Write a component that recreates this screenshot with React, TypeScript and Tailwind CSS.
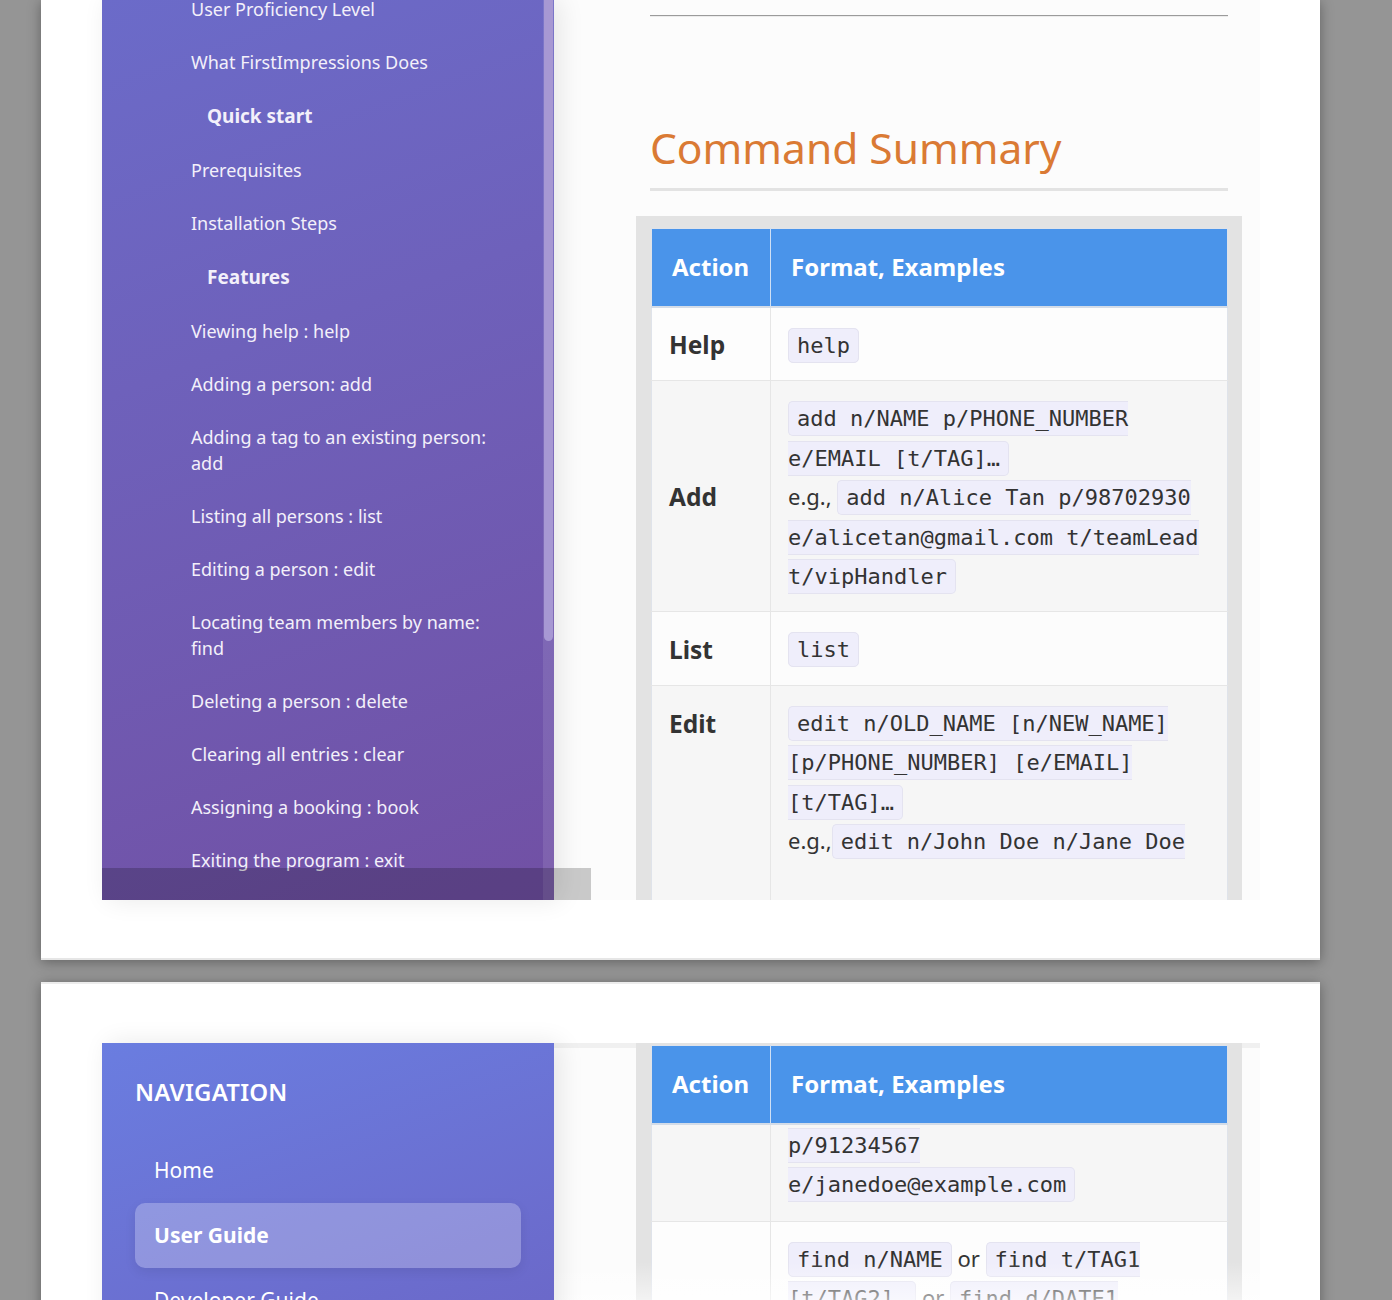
import React from "react"

const sans = "font-['Noto_Sans',sans-serif]"

// inline code chip, sliced like box-decoration-break: slice
const chip =
  "font-['DejaVu_Sans_Mono',monospace] text-[22px] text-[#333] bg-[#efeefb] border border-[#e4e3f0] rounded-[5px] px-[8px] py-[4px]"

type TocItem = { label: string; bold?: boolean }

const toc: TocItem[] = [
  { label: "User Proficiency Level" },
  { label: "What FirstImpressions Does" },
  { label: "Quick start", bold: true },
  { label: "Prerequisites" },
  { label: "Installation Steps" },
  { label: "Features", bold: true },
  { label: "Viewing help : help" },
  { label: "Adding a person: add" },
  { label: "Adding a tag to an existing person: add" },
  { label: "Listing all persons : list" },
  { label: "Editing a person : edit" },
  { label: "Locating team members by name: find" },
  { label: "Deleting a person : delete" },
  { label: "Clearing all entries : clear" },
  { label: "Assigning a booking : book" },
  { label: "Exiting the program : exit" },
]

function TableHead() {
  return (
    <thead>
      <tr className="bg-[#4a94ea] border-b-2 border-[#d3dce8]">
        <th className="h-[78px] px-[20px] text-left text-[24px] font-bold text-white border-r border-[#cfe0f5]">
          Action
        </th>
        <th className="h-[78px] px-[20px] text-left text-[24px] font-bold text-white">
          Format, Examples
        </th>
      </tr>
    </thead>
  )
}

// padding is added per row
const labelCell = "px-[17px] text-[24.5px] font-bold text-[#333] border-r border-[#e6e6e6]"
const bodyCell = "px-[17px] text-[21px] text-[#333] leading-[39.5px]"

// plain words between chips, a touch bigger than the strut
function Word({ children }: { children: React.ReactNode }) {
  return <span className="text-[22px] leading-none">{children}</span>
}

export default function App() {
  return (
    <div className={`${sans} relative w-[1392px] h-[1300px] overflow-hidden bg-[#959595]`}>
      {/* page 1 */}
      <div className="relative ml-[41px] w-[1279px] h-[960px] bg-white border-b-2 border-[#e6e6e6] shadow-[0_2px_12px_rgba(0,0,0,0.35)] overflow-hidden">
        <div className="flex h-[900px] pl-[61px]">
          <aside className="relative z-10 w-[452px] h-full overflow-hidden bg-linear-160 from-[#6b6bc9] to-[#7150a4] shadow-[6px_0_24px_rgba(0,0,0,0.09)]">
            <ul className="-mt-[18px] pr-[60px] text-[#f3f0fa]">
              {toc.map((t) => (
                <li
                  key={t.label}
                  className={
                    t.bold
                      ? "pl-[105px] py-[13.5px] leading-[28px] text-[19px] font-bold"
                      : "pl-[89px] py-[13.5px] leading-[26px] text-[18px]"
                  }
                >
                  {t.label}
                </li>
              ))}
            </ul>
            {/* scrollbar */}
            <div className="absolute right-0 top-0 h-full w-[11px] bg-white/10">
              <div className="ml-[1px] w-[9px] h-[641px] rounded-b-[5px] bg-[#a798d3]" />
            </div>
          </aside>

          <main className="w-[706px] h-full bg-[#fcfcfc] overflow-hidden">
            <div className="mt-[15px] ml-[96px] w-[578px] h-[2px] border-t border-[#9b9b9b] bg-[#ececec]" />
            <h2 className="mt-[101px] ml-[96px] w-[578px] pb-[10px] border-b-[3px] border-[#e3e3e3] text-[42.5px] leading-[60px] text-[#da7a34]">
              Command Summary
            </h2>
            <div className="mt-[25px] ml-[82px] w-[606px] h-[684px] overflow-hidden bg-[#e3e3e3] pt-[12px] px-[15px]">
              <table className="w-[576px] table-fixed border-collapse border border-[#dfe3ea]">
                <colgroup>
                  <col className="w-[119px]" />
                  <col className="w-[457px]" />
                </colgroup>
                <TableHead />
                <tbody>
                  <tr className="bg-[#fdfdfd] border-b border-[#e6e6e6]">
                    <td className={`${labelCell} h-[74px] pt-[18px] pb-[14px]`}>Help</td>
                    <td className={`${bodyCell} pt-[18px] pb-[14px]`}>
                      <code className={chip}>help</code>
                    </td>
                  </tr>
                  <tr className="bg-[#f6f6f6] border-b border-[#e6e6e6]">
                    <td className={`${labelCell} pt-[18px] pb-[14px]`}>Add</td>
                    <td className={`${bodyCell} pt-[18px] pb-[14px]`}>
                      <code className={chip}>add n/NAME p/PHONE_NUMBER e/EMAIL [t/TAG]…</code>
                      <br />
                      <Word>e.g., </Word>
                      <code className={chip}>add n/Alice Tan p/98702930 e/alicetan@gmail.com t/teamLead t/vipHandler</code>
                    </td>
                  </tr>
                  <tr className="bg-[#fcfcfc] border-b border-[#e6e6e6]">
                    <td className={`${labelCell} h-[74px] pt-[18px] pb-[14px]`}>List</td>
                    <td className={`${bodyCell} pt-[18px] pb-[14px]`}>
                      <code className={chip}>list</code>
                    </td>
                  </tr>
                  <tr className="bg-[#f6f6f6]">
                    <td className={`${labelCell} align-top h-[260px] pt-[18px]`}>
                      <span className="block leading-[39.5px]">Edit</span>
                    </td>
                    <td className={`${bodyCell} align-top pt-[18px]`}>
                      <code className={chip}>edit n/OLD_NAME [n/NEW_NAME] [p/PHONE_NUMBER] [e/EMAIL] [t/TAG]…</code>
                      <br />
                      <Word>e.g.,</Word>
                      <code className={`${chip} rounded-r-none border-r-0 pr-0`}>edit n/John Doe n/Jane Doe</code>
                    </td>
                  </tr>
                </tbody>
              </table>
            </div>
          </main>
        </div>
        {/* sticky footer shade */}
        <div className="absolute z-20 left-[61px] top-[868px] w-[489px] h-[32px] bg-black/20" />
      </div>

      {/* page 2 */}
      <div className="relative mt-[22px] ml-[41px] w-[1279px] h-[400px] bg-white border-t-2 border-[#ececec] shadow-[0_2px_12px_rgba(0,0,0,0.35)] overflow-hidden">
        <div className="flex pt-[59px] pl-[61px]">
          <aside className="relative z-10 w-[452px] h-[400px] px-[33px] pt-[33px] bg-linear-160 from-[#6a7de0] to-[#6b62c2] shadow-[6px_0_24px_rgba(0,0,0,0.09)]">
            <div className="h-[32px] leading-[32px] text-[24px] font-semibold text-white tracking-[0.2px]">NAVIGATION</div>
            <ul className="mt-[30px] text-[21px] text-white">
              <li className="h-[65px] flex items-center px-[19px] rounded-[10px]">Home</li>
              <li className="h-[65px] flex items-center px-[19px] rounded-[10px] bg-white/25 font-bold shadow-[0_4px_12px_rgba(0,0,0,0.08)]">
                User Guide
              </li>
              <li className="h-[65px] flex items-center px-[19px] rounded-[10px]">Developer Guide</li>
            </ul>
          </aside>
          <main className="w-[706px] h-[400px] bg-[#fcfcfc] border-t-[5px] border-[#f0f0f0]">
            <div className="-mt-[5px] ml-[82px] w-[606px] h-[400px] overflow-hidden bg-[#e3e3e3] pt-[2px] px-[15px]">
              <table className="w-[576px] table-fixed border-collapse border border-[#dfe3ea]">
                <colgroup>
                  <col className="w-[119px]" />
                  <col className="w-[457px]" />
                </colgroup>
                <TableHead />
                <tbody>
                  <tr className="bg-[#f6f6f6] border-b border-[#e6e6e6]">
                    <td className={`${labelCell} pt-[1px] pb-[16px]`} />
                    <td className={`${bodyCell} pt-[1px] pb-[16px]`}>
                      <code className={`${chip} rounded-l-none border-l-0 pl-0`}>
                        p/91234567 e/janedoe@example.com
                      </code>
                    </td>
                  </tr>
                  <tr className="bg-[#fdfdfd]">
                    <td className={`${labelCell} pt-[18px] pb-[14px]`} />
                    <td className={`${bodyCell} pt-[18px] pb-[14px]`}>
                      <code className={chip}>find n/NAME</code>
                      <Word> or </Word>
                      <code className={chip}>find t/TAG1 [t/TAG2]…</code>
                      <Word> or </Word>
                      <code className={chip}>find d/DATE1 [d/DATE2]…</code>
                    </td>
                  </tr>
                </tbody>
              </table>
            </div>
          </main>
        </div>
        {/* bottom fade */}
        <div className="absolute left-0 right-0 top-[278px] h-[40px] bg-linear-to-b from-white/0 to-white/60" />
      </div>
    </div>
  )
}
